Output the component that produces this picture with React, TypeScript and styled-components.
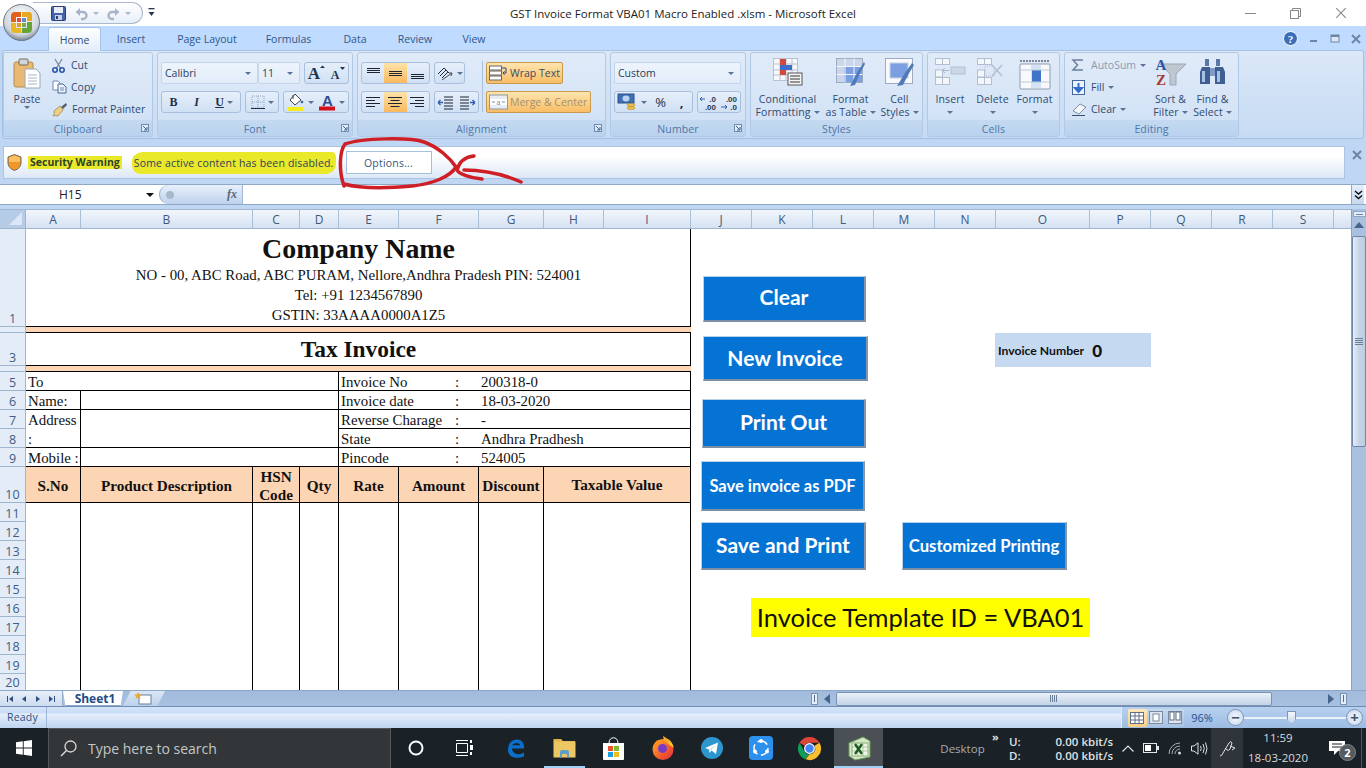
import React from 'react';
import styled, { createGlobalStyle } from 'styled-components';

const UI = '"Open Sans", "Noto Sans", sans-serif';
const SERIF = '"Liberation Serif", serif';
const CAL = 'Lato, "Open Sans", sans-serif';

const Global = createGlobalStyle`
  html, body { margin: 0; padding: 0; background: #fff; overflow: hidden; }
  * { box-sizing: border-box; }
  svg { display: block; flex: none; overflow: visible; }
`;

const Page = styled.div`
  position: relative; width: 1366px; height: 768px; overflow: hidden;
  display: flex; flex-direction: column; background: #bfd7f3; font-family: ${UI};
`;

/* ---------- title ---------- */
const TitleBar = styled.div`
  height: 26px; flex: none; background: #fff; display: grid; grid-template-columns: 1fr auto 1fr; align-items: center;
`;
const Qat = styled.div`
  display: flex; align-items: center; height: 22px; margin-top: 2px; padding-left: 17px;
  width: 143px;
`;
const QatPill = styled.div`
  position: absolute; left: 33px; top: 2px; width: 110px; height: 22px; border: 1px solid #a9b8cb; border-left: none;
  border-radius: 0 11px 11px 0; background: linear-gradient(#fff, #e8eff8);
  display: flex; align-items: center; padding-left: 18px;
`;
const QatMore = styled.div`position: absolute; left: 148px; top: 8px;`;
const Orb = styled.div`position: absolute; left: 3px; top: 4px; width: 37px; height: 37px; z-index: 3;`;
const Title = styled.div`font-size: 11.5px; color: #222; white-space: nowrap; padding-top: 1px;`;
const WinBtns = styled.div`
  display: flex; justify-content: flex-end; align-items: center; padding-right: 19px; gap: 34px;
`;
const Gap = styled.span<{ $w: number }>`width: ${p => p.$w}px; flex: none;`;

/* ---------- tabs ---------- */
const TabsRow = styled.div`
  height: 24px; flex: none; background: #bfdbff; display: flex; align-items: flex-end; padding-left: 48px;
`;
const Tab = styled.div<{ $on?: boolean; $w: number }>`
  width: ${p => p.$w}px; height: 23px; display: flex; align-items: center; justify-content: center;
  font-size: 10.5px; color: #2f5687; padding-top: 1px;
  ${p => p.$on ? `background: linear-gradient(#fdfeff, #e3eefa); border: 1px solid #a8c4e4; border-bottom: none; border-radius: 3px 3px 0 0; margin-bottom:-1px; height:24px; z-index:1; color:#2a4a75;` : ''}
`;
const TabRight = styled.div`
  margin-left: auto; display: flex; align-items: center; height: 23px; padding-right: 5px; gap: 12px;
`;

/* ---------- ribbon ---------- */
const Ribbon = styled.div`
  height: 89px; flex: none; margin: 0 2px; display: flex; gap: 4px; padding: 1px 0 0 0;
  background: linear-gradient(#dbe8f8, #c6dbf3); border: 1px solid #a5c1e3; border-radius: 3px;
`;
const Group = styled.div<{ $w: number }>`
  width: ${p => p.$w}px; height: 85px; display: flex; flex-direction: column; border: 1px solid #b2c9e5; border-radius: 3px;
  background: linear-gradient(#e0ebf9, #cfe0f5);
`;
const GroupBody = styled.div`flex: 1; display: flex; min-height: 0;`;
const GroupLabel = styled.div`
  position: relative; height: 16px; background: linear-gradient(#c4d9f1, #b9d2ee); color: #4e76a8; font-size: 10.5px;
  text-align: center; line-height: 18px; letter-spacing: .1px;
`;
const Launcher = styled.div`position: absolute; right: 3px; top: 4px;`;
const PasteCol = styled.div`
  width: 46px; display: flex; flex-direction: column; align-items: center; padding-top: 5px; font-size: 10.5px; color: #2f4a70;
  span { margin-top: 3px; line-height: 14px; }
`;
const ClipCmds = styled.div`display: flex; flex-direction: column; gap: 4px; padding: 3px 0 0 2px;`;
const Cmd = styled.div<{ $dim?: boolean }>`
  height: 18px; display: flex; align-items: center; gap: 4px; font-size: 10.5px; white-space: nowrap;
  color: ${p => p.$dim ? '#8b9ab0' : '#2f4a70'};
`;
const CmdText = styled.span<{ $ml: number }>`margin-left: ${p => p.$ml}px;`;
const Stack = styled.div<{ $l: number; $gap?: number }>`
  display: flex; flex-direction: column; gap: ${p => p.$gap ?? 8}px; padding: 9px 0 0 ${p => p.$l}px;
`;
const Row = styled.div<{ $gap?: number }>`display: flex; gap: ${p => p.$gap ?? 4}px; height: 22px;`;
const Combo = styled.div<{ $w: number; $mr?: number }>`
  width: ${p => p.$w}px; height: 22px; background: linear-gradient(#eef4fc, #e2ecf9); border: 1px solid #c4d6ec; border-radius: 2px;
  display: flex; align-items: center; justify-content: space-between; padding: 0 6px 0 3px;
  font-size: 10.5px; color: #2a3f5c; margin-right: ${p => p.$mr ?? 0}px;
`;
const Caret = styled.i<{ $c?: string }>`
  width: 0; height: 0; border: 3px solid transparent; border-top: 3px solid ${p => p.$c ?? '#5a7394'}; border-bottom: none; display: block; flex: none;
`;
const BtnGroup = styled.div<{ $w: number }>`
  width: ${p => p.$w}px; height: 22px; display: flex; border: 1px solid #a9c0dc; border-radius: 3px;
  background: linear-gradient(#e6effb, #d0e0f4);
`;
const Btn = styled.div<{ $w?: number; $on?: boolean }>`
  width: ${p => p.$w ? `${p.$w}px` : 'auto'}; ${p => p.$w ? '' : 'flex: 1;'} display: flex; align-items: center; justify-content: center; gap: 3px;
  font: 700 12px ${SERIF}; color: #1f2f45;
  ${p => p.$on ? 'background: linear-gradient(#fde3a8, #f9b95e);' : ''}
`;
const Glyph = styled.span<{ $i?: boolean; $u?: boolean }>`
  font-style: ${p => p.$i ? 'italic' : 'normal'}; text-decoration: ${p => p.$u ? 'underline' : 'none'};
`;
const NumGlyph = styled.span<{ $b?: boolean }>`font: ${p => p.$b ? 700 : 400} 13px ${UI};`;
const Divider = styled.div`width: 1px; height: 51px; background: #a9c0dc; margin: 8px 3px 0 3px;`;
const OrangeBtn = styled.div<{ $w: number; $dim?: boolean }>`
  width: ${p => p.$w}px; height: 22px; border: 1px solid #c89a4d; border-radius: 2px; background: linear-gradient(#fde5ae, #f9bd66);
  display: flex; align-items: center; gap: 2px; padding-left: 2px; font-size: 10.5px; white-space: nowrap;
  color: ${p => p.$dim ? '#a78f6c' : '#3a4a60'};
`;
const BigCmd = styled.div<{ $w: number }>`
  width: ${p => p.$w}px; display: flex; flex-direction: column; align-items: center; font-size: 10.5px; line-height: 13px; color: #2f4a70; text-align: center; white-space: nowrap;
  padding-top: 5px; letter-spacing: .12px;
  & > svg { margin-bottom: 7px; }
`;
const BigLine = styled.div<{ $mt: number }>`margin-top: ${p => p.$mt}px;`;
const Line2 = styled.div`display: flex; align-items: center; gap: 3px; justify-content: center; height: 13px;`;
const EditCol = styled.div`width: 85px; padding: 3px 0 0 7px; display: flex; flex-direction: column; gap: 4px;`;

/* ---------- message bar ---------- */
const MsgWrap = styled.div`
  height: 45px; flex: none; padding: 7px 3px 5px 3px; display: flex; position: relative;
`;
const MsgBar = styled.div`
  width: 1342px; height: 33px; background: linear-gradient(#ffffff 30%, #dde8f6); border: 1px solid #a9c4e4;
  display: flex; align-items: center; padding-left: 3px; font-size: 10.5px;
`;
const Mark = styled.span`
  background: #e9e92a; height: 13px; line-height: 13px; font-weight: 700; color: #2c4226; padding: 0 2px; margin-left: 6px; white-space: nowrap;
`;
const Brush = styled.span`
  background: #e9e92a; height: 22px; line-height: 22px; margin-left: 10px; padding: 0 2px; color: #31405a; border-radius: 11px 4px 10px 8px / 9px 5px 10px 9px; white-space: nowrap; letter-spacing: .17px;
`;
const OptionsBtn = styled.div`
  width: 86px; height: 23px; margin-left: 10px; border: 1px solid #a9c0dc; background: #fff; color: #36567f; display: flex; align-items: center; justify-content: center; font-size: 10.5px; letter-spacing: .2px;
`;
const MsgClose = styled.div`position: absolute; right: 4px; top: 11px;`;
const Scribble = styled.svg`position: absolute; left: 0; top: 0; pointer-events: none; z-index: 5;`;

/* ---------- formula ---------- */
const FormulaBar = styled.div`
  height: 21px; flex: none; display: flex; background: #fff; border-top: 1px solid #8ea8c6; border-bottom: 1px solid #8ea8c6; padding-right: 2px;
`;
const NameBox = styled.div`
  width: 159px; display: flex; align-items: center; font-size: 12px; color: #222; padding-left: 59px; position: relative;
`;
const NameCaret = styled.i`position: absolute; left: 146px; top: 8px; width: 0; height: 0; border: 4px solid transparent; border-top: 4px solid #111; border-bottom: none;`;
const FxBox = styled.div`
  width: 84px; background: linear-gradient(#e8f0fa, #bdd2ec); border-left: 1px solid #8ea8c6; border-right: 1px solid #a3bad6;
  border-radius: 10px 0 0 10px; display: flex; align-items: center; justify-content: space-between; padding: 0 5px 0 6px;
  font: italic 700 12px ${SERIF}; color: #5a6675;
`;
const FxDot = styled.i`width: 8px; height: 8px; border-radius: 50%; background: #a9b9cc;`;
const FormulaInput = styled.div`flex: 1;`;
const Expand = styled.div`
  width: 13px; background: linear-gradient(#e6eff9, #c6d8ef); border-left: 1px solid #8ea8c6; display: flex; align-items: center; justify-content: center;
`;

/* ---------- sheet ---------- */
const SheetArea = styled.div`
  height: 485px; flex: none; padding-top: 4px; display: flex;
`;
const SheetMain = styled.div`flex: 1; display: flex; flex-direction: column; min-width: 0;`;
const ColRow = styled.div`display: flex; height: 20px; flex: none; background: linear-gradient(#f2f6fc, #d5e2f3); border-top: 1px solid #9eb6ce; border-bottom: 1px solid #9eb6ce;`;
const Corner = styled.div`width: 26px; background: #b5cbe6; border-right: 1px solid #9eb6ce; position: relative; overflow: hidden;
  &::after { content: ''; position: absolute; right: 3px; bottom: 3px; width: 0; height: 0; border-left: 13px solid transparent; border-bottom: 13px solid #dbe7f6; }
`;
const ColH = styled.div<{ $w: number }>`
  width: ${p => p.$w}px; border-right: 1px solid #a9bfd8; font-size: 12px; color: #41597a; display: flex; align-items: center; justify-content: center;
`;
const SheetBody = styled.div`flex: 1; display: flex; min-height: 0; background: #fff; overflow: hidden;`;
const RowHeads = styled.div`width: 26px; flex: none; background: #e4ecf7; border-right: 1px solid #9eb6ce;`;
const RowH = styled.div<{ $h: number }>`
  height: ${p => p.$h}px; border-bottom: 1px solid #9eb6ce; font-size: 12.5px; line-height: 14px; color: #3f5c82; display: flex; align-items: flex-end; justify-content: center; overflow: hidden;
  &:last-child { border-bottom: none; }
`;
const Canvas = styled.div`position: relative; flex: 1;`;
const Invoice = styled.div`
  width: 665px; display: grid;
  grid-template-columns: 55px 172px 47px 39px 60px 80px 65px 60px 87px;
  grid-template-rows: 98px 6px 33px 6px repeat(5, 19px) 36px 187px;
  border-right: 1px solid #000; font-family: ${SERIF}; color: #111; font-size: 14.85px;
`;
const Cell = styled.div<{ $c?: string; $r?: string }>`
  grid-column: ${p => p.$c ?? 'auto'}; grid-row: ${p => p.$r ?? 'auto'};
  border-right: 1px solid #000; border-bottom: 1px solid #000;
  padding: 1px 0 0 2px; line-height: 18.5px; white-space: nowrap; overflow: hidden;
`;
const Letterhead = styled.div`
  grid-column: 1 / -1; border-bottom: 1px solid #000; text-align: center; display: flex; flex-direction: column; align-items: center; padding-top: 4px;
`;
const Company = styled.div`font-weight: 700; font-size: 27.9px; line-height: 31px; margin-bottom: 1px;`;
const AddrLine = styled.div`line-height: 20px;`;
const Band = styled.div`grid-column: 1 / -1; background: #fcd5b4; border-bottom: 1px solid #000;`;
const TaxTitle = styled.div`grid-column: 1 / -1; border-bottom: 1px solid #000; text-align: center; font-weight: 700; font-size: 23.4px; line-height: 33px;`;
const Detail = styled.div<{ $r: number }>`grid-column: 5 / -1; grid-row: ${p => p.$r}; display: flex; border-bottom: 1px solid #000; padding: 1px 0 0 2px; line-height: 18px;`;
const DLabel = styled.div`width: 114px; white-space: nowrap;`;
const DColon = styled.div`width: 26px;`;
const Head = styled.div<{ $c?: string; $pt?: number }>`
  grid-column: ${p => p.$c ?? 'auto'}; background: #fcd5b4; border-right: 1px solid #000; border-bottom: 1px solid #000; padding-top: ${p => p.$pt ?? 2}px;
  font-weight: 700; font-size: 15.2px; line-height: 18px; text-align: center; display: flex; align-items: center; justify-content: center; white-space: pre-line;
`;
const Blank = styled.div<{ $c?: string }>`grid-column: ${p => p.$c ?? 'auto'}; border-right: 1px solid #000;`;

const Shape = styled.div<{ $x: number; $y: number; $w: number; $h: number; $fs: number; $pb?: number }>`
  position: absolute; left: ${p => p.$x - 26}px; top: ${p => p.$y - 229}px; width: ${p => p.$w}px; height: ${p => p.$h}px;
  background: #0473d4; color: #fff; font: 700 ${p => p.$fs}px ${CAL}; padding-bottom: ${p => p.$pb ?? 3}px;
  border-top: 1px solid #b9d3ea; border-left: 1px solid #b9d3ea; border-right: 2px solid #8596a8; border-bottom: 2px solid #7c8ea3;
  display: flex; align-items: center; justify-content: center; white-space: nowrap;
`;
const InvNo = styled.div`
  position: absolute; left: ${995 - 26}px; top: ${333 - 229}px; width: 156px; height: 34px; background: #c5d9f1; display: flex; align-items: center; padding-left: 3px; gap: 8px;
  font: 700 12.2px ${CAL}; color: #111; white-space: nowrap;
  b { font-size: 17px; font-weight: 900; }
`;
const TemplateId = styled.div`
  position: absolute; left: ${751 - 26}px; top: ${598 - 229}px; width: 339px; height: 39px; background: #ffff00; color: #111; font: 400 25.5px ${CAL}; display: flex; align-items: center; justify-content: center; white-space: nowrap; padding-bottom: 2px;
`;

const VScroll = styled.div`
  width: 15px; flex: none; background: #a9c0de; display: flex; flex-direction: column; align-items: center; position: relative; border-left: 1px solid #87a2c4;
`;
const Split = styled.div`width: 13px; height: 6px; margin-top: 2px; background: #e4edf8; border: 1px solid #8ba6c8; display: flex; align-items: center; justify-content: center;
  &::after { content: ''; width: 7px; height: 1px; background: #6c84a3; }
`;
const UpArrow = styled.i`width: 0; height: 0; margin-top: 5px; border: 5px solid transparent; border-bottom: 6px solid #46658c; border-top: none;`;
const VThumb = styled.div`
  margin-top: 8px; width: 14px; height: 211px; background: linear-gradient(90deg, #e6eef8, #c6d4e6 50%, #bccde2); border: 1px solid #6f88a8; border-radius: 2px; display: flex; align-items: center; justify-content: center;
`;
const Grip = styled.div<{ $v?: boolean }>`
  ${p => p.$v ? 'width: 8px; height: 7px; background: repeating-linear-gradient(90deg, #6a7f99 0 1px, transparent 1px 2px);' : 'width: 8px; height: 7px; background: repeating-linear-gradient(#6a7f99 0 1px, transparent 1px 2px);'}
`;

/* ---------- tab bar ---------- */
const TabBar = styled.div`
  height: 17px; flex: none; display: flex; background: linear-gradient(#a2bbdc, #a9c1e0); border-top: 1px solid #8ca7c8; border-bottom: 1px solid #6f8db3; align-items: stretch;
`;
const SheetNav = styled.div`width: 63px; flex: none; background: linear-gradient(#e7eff9, #cddcf0); border-right: 1px solid #97afcd; display: flex; align-items: center; justify-content: space-around; padding: 0 3px;`;
const SheetTab = styled.div`
  width: 60px; flex: none; background: #fff; border-bottom: 1px solid #8ca7c8; font: 700 12px ${UI}; color: #234a85; display: flex; align-items: center; justify-content: center; padding-left: 4px;
  clip-path: polygon(0 0, 100% 0, 96% 100%, 4% 100%);
`;
const NewTab = styled.div`
  width: 42px; height: 15px; flex: none; background: linear-gradient(#dbe7f6, #bdd2ec); display: flex; align-items: center; justify-content: center; clip-path: polygon(18% 0, 100% 0, 82% 100%, 0 100%);
`;
const HScrollZone = styled.div`
  margin-left: auto; width: 555px; display: flex; align-items: center; height: 100%;
`;
const Tick = styled.div`width: 7px; height: 12px; background: #e6eef8; border: 1px solid #7b93b3; display: flex; justify-content: center; align-items: center; margin-right: 2px;
  &::after { content: ''; width: 1px; height: 7px; background: #566c8a; }
`;
const ArrowL = styled.i`width: 0; height: 0; margin-left: 4px; border: 5px solid transparent; border-right: 6px solid #46658c; border-left: none;`;
const ArrowR = styled.i`width: 0; height: 0; margin-right: 6px; border: 5px solid transparent; border-left: 6px solid #46658c; border-right: none;`;
const HThumb = styled.div`
  width: 441px; height: 14px; margin-left: 6px; margin-right: 56px; background: linear-gradient(#eaf1f9, #c3d3e6); border: 1px solid #7b93b3; border-radius: 2px; display: flex; align-items: center; justify-content: center;
`;
const CornerFill = styled.div`width: 17px; flex: none;`;

/* ---------- status ---------- */
const StatusBar = styled.div`
  height: 21px; flex: none; display: flex; align-items: stretch; background: linear-gradient(#d4e4f9 0, #c8dcf6 30%, #e7f0fb 32%, #bfd4f0); font-size: 11px; color: #2e5180;
`;
const Ready = styled.div`width: 47px; display: flex; align-items: center; padding: 0 0 2px 7px; border-right: 1px solid #9db7d8; font-size: 10.5px; letter-spacing: .2px;`;
const StatusRight = styled.div`
  margin-left: auto; width: 245px; display: flex; align-items: center; background: linear-gradient(#b7d0ef, #9dbce3); padding-left: 6px; border-left: 1px solid #e2ecf9;
`;
const ViewBtns = styled.div`display: flex; width: 56px; height: 18px; background: linear-gradient(#c6d9f1,#a9c3e5); border-radius: 2px;`;
const ViewBtn = styled.div<{ $on?: boolean }>`
  flex: 1; display: flex; align-items: center; justify-content: center; ${p => p.$on ? 'background: linear-gradient(#fde9bd,#fbcf83); border-radius: 2px;' : ''}
`;
const Pct = styled.div`width: 36px; margin-right: 7px; text-align: center; color: #24528f; font-size: 11px;`;
const ZoomKnob = styled.div`
  width: 17px; height: 17px; flex: none; border-radius: 50%; border: 1px solid #7e96b6; background: radial-gradient(#f4f8fd, #c5d6ec); display: flex; align-items: center; justify-content: center; color: #3e556f; font: 700 15px/13px ${UI};
`;
const ZoomTrack = styled.div`
  width: 102px; height: 2px; background: #e9f1fb; position: relative;
`;
const ZoomThumb = styled.div`
  position: absolute; left: 43px; top: -6px; width: 9px; height: 13px; background: linear-gradient(#f5f8fd,#c7d6ea); border: 1px solid #7e96b6; clip-path: polygon(0 0, 100% 0, 100% 65%, 50% 100%, 0 65%);
`;

/* ---------- taskbar ---------- */
const Taskbar = styled.div`height: 40px; flex: none; background: #1a2127; display: flex; align-items: stretch; color: #d8dadc;`;
const Start = styled.div`width: 48px; display: flex; align-items: center; justify-content: center;`;
const SearchBox = styled.div`
  width: 343px; background: #333638; border: 1px solid #55585b; border-bottom: none; display: flex; align-items: center; padding-left: 11px; gap: 11px; font-size: 14px; color: #c4c6c8;
`;
const Slot = styled.div<{ $active?: boolean; $open?: boolean; $ml?: number }>`
  width: 49px; display: flex; align-items: center; justify-content: center; margin-left: ${p => p.$ml ?? 0}px; position: relative;
  ${p => p.$active ? 'background: #4a5056;' : ''}
  ${p => (p.$open || p.$active) ? `&::after { content: ''; position: absolute; left: ${p.$active ? 0 : 4}px; right: ${p.$active ? 0 : 4}px; bottom: 0; height: 2px; background: #9fd0f5; }` : ''}
`;
const Spacer = styled.div`flex: 1;`;
const TrayItem = styled.div<{ $w: number; $hl?: boolean }>`
  width: ${p => p.$w}px; display: flex; align-items: center; justify-content: center; ${p => p.$hl ? 'background: #2f353a;' : ''}
  font-size: 12px;
`;
const DeskLabel = styled(TrayItem)`color: #a9acaf; font-size: 11.5px; padding-left: 0;`;
const Chevrons = styled(TrayItem)`align-items: flex-start; padding: 1px 5px 0 0; font: 700 11px ${UI}; color: #ddd; letter-spacing: -1px;`;
const Net = styled.div`
  width: 113px; display: flex; justify-content: space-between; padding: 7px 5px 0 4px; font: 600 11.5px/13.5px ${UI}; color: #dfe1e3; white-space: nowrap; text-align: right;
`;
const NetLabels = styled.div`text-align: left;`;
const Clock = styled.div`
  width: 70px; display: flex; flex-direction: column; align-items: center; justify-content: center; font-size: 11.5px; line-height: 20px; color: #d7d9db; white-space: nowrap;
`;
const Notif = styled.div`width: 48px; position: relative; display: flex; align-items: center; justify-content: center;`;
const NotifBadge = styled.div`
  position: absolute; left: 26px; top: 16px; width: 17px; height: 17px; border-radius: 50%; background: #555a5f; border: 1px solid #80858a; color: #fff; font: 700 11px/15px ${UI}; text-align: center;
`;
const EndEdge = styled.div`width: 5px; border-left: 1px solid #555;`;

/* ---------- icons ---------- */
const IOrb = () => (
  <svg width="37" height="37" viewBox="0 0 37 37">
    <defs>
      <radialGradient id="oR" cx="50%" cy="35%" r="65%"><stop offset="0" stopColor="#ffffff" /><stop offset=".75" stopColor="#cfd6de" /><stop offset="1" stopColor="#7b8593" /></radialGradient>
    </defs>
    <circle cx="18.5" cy="18.5" r="18" fill="url(#oR)" stroke="#6d7783" />
    <path d="M8 12 Q8 8 12 8 L18 8 L18 13 L13 13 L13 18 L8 18 Z" fill="#e2601d" />
    <path d="M19 8 L26 8 Q29 8 29 12 L29 17 L24 17 L24 13 L19 13 Z" fill="#e6a91f" />
    <path d="M8 19 L13 19 L13 24 L18 24 L18 29 L12 29 Q8 29 8 25 Z" fill="#e8b525" />
    <path d="M24 18 L29 18 L29 25 Q29 29 25 29 L19 29 L19 24 L24 24 Z" fill="#66a53a" />
    <rect x="14" y="14" width="4" height="4" fill="#d8503a" /><rect x="19" y="14" width="4" height="4" fill="#5b8fc9" />
    <rect x="14" y="19" width="4" height="4" fill="#e49a28" /><rect x="19" y="19" width="4" height="4" fill="#79ad50" />
  </svg>
);
const ISave = () => (
  <svg width="15" height="15" viewBox="0 0 15 15"><rect x=".5" y=".5" width="14" height="14" rx="1" fill="#4563a8" stroke="#2b3d75" /><rect x="3" y="1" width="9" height="6" fill="#e8eef8" /><rect x="4" y="9" width="7" height="5" fill="#c8d2e6" /><rect x="5" y="10" width="2" height="3" fill="#2b3d75" /></svg>
);
const Flippable = styled.svg<{ $flip?: boolean }>`transform: ${p => p.$flip ? 'scaleX(-1)' : 'none'};`;
const IUndo = ({ flip }: { flip?: boolean }) => (
  <Flippable $flip={flip} width="13" height="13" viewBox="0 0 13 13"><path d="M3 5 H8 A3.5 3.5 0 0 1 8 12 H6" fill="none" stroke="#a7b5c7" strokeWidth="2.4" /><path d="M5 1 L5 9 L0.5 5 Z" fill="#a7b5c7" /></Flippable>
);
const IMore = () => (<svg width="7" height="9" viewBox="0 0 7 9"><rect width="6" height="1.3" x=".5" y="0" fill="#26364d" /><path d="M.5 4 H6.5 L3.5 8 Z" fill="#26364d" /></svg>);
const IHelp = () => (<svg width="15" height="15" viewBox="0 0 15 15"><circle cx="7.5" cy="7.5" r="7" fill="#3d6fb8" stroke="#fff" /><text x="7.5" y="11.5" textAnchor="middle" fontSize="11" fontWeight="700" fontFamily="Liberation Serif" fill="#fff">?</text></svg>);
const IX = ({ s = 10, c = '#6d85a3', w = 2 }: { s?: number; c?: string; w?: number }) => (<svg width={s} height={s} viewBox="0 0 10 10"><path d="M1 1 L9 9 M9 1 L1 9" stroke={c} strokeWidth={w} /></svg>);
const IMin = () => (<svg width="8" height="8" viewBox="0 0 8 8"><rect y="5" width="7" height="2" fill="#6d85a3" /></svg>);
const IRes = () => (<svg width="9" height="9" viewBox="0 0 9 9"><rect x="1" y="1" width="8" height="7" fill="#dbe7f6" stroke="#6d85a3" /><rect x="1" y="1" width="8" height="2" fill="#6d85a3" /></svg>);
const IPaste = () => (
  <svg width="28" height="31" viewBox="0 0 28 31"><rect x="1" y="4" width="19" height="25" rx="2" fill="#e9b872" stroke="#b58a4e" /><rect x="6" y="1" width="9" height="6" rx="1" fill="#cfd5dc" stroke="#7d6b4e" /><path d="M12 11 H23 L27 15 V30 H12 Z" fill="#fff" stroke="#9aa8ba" /><path d="M15 17H24M15 20H24M15 23H24M15 26H24" stroke="#aab6c6" /></svg>
);
const ICut = () => (<svg width="13" height="15" viewBox="0 0 13 15"><path d="M3 1 L9 11 M10 1 L4 11" stroke="#7d8da3" strokeWidth="1.4" /><circle cx="3" cy="12" r="2.2" fill="none" stroke="#2d56a8" strokeWidth="1.6" /><circle cx="10" cy="12" r="2.2" fill="none" stroke="#2d56a8" strokeWidth="1.6" /></svg>);
const ICopy = () => (<svg width="15" height="14" viewBox="0 0 15 14"><path d="M1 1 H6 L8 3 V10 H1 Z" fill="#fff" stroke="#6d8bb3" /><path d="M6 4 H11 L14 7 V13 H6 Z" fill="#eef4fb" stroke="#44689c" /><path d="M8 8H12M8 10H12" stroke="#6d8bb3" /></svg>);
const IPainter = () => (<svg width="16" height="15" viewBox="0 0 16 15"><path d="M9 5 L14 1 L15 3 L11 7 Z" fill="#54606f" /><path d="M2 9 L8 4 L11 8 L6 14 Q3 13 1 14 Q3 12 2 9 Z" fill="#ecd087" stroke="#9a7c3c" strokeWidth=".7" /></svg>);
const ILauncher = () => (<svg width="8" height="8" viewBox="0 0 8 8"><rect x=".5" y=".5" width="7" height="7" fill="#e3edf9" stroke="#6f8cb0" /><path d="M2 2 L6 6 M6 3 V6 H3" stroke="#41628d" fill="none" /></svg>);
const IGrow = ({ big }: { big?: boolean }) => (
  <svg width="18" height="18" viewBox="0 0 18 18"><text x="7" y="15" textAnchor="middle" fontFamily="Liberation Serif" fontWeight="700" fontSize={big ? 17 : 12} fill="#22344d">A</text>{big ? <path d="M13 4 L15.5 1.5 L18 4 Z" fill="#22344d" /> : <path d="M12 3 H17 L14.5 6 Z" fill="#22344d" />}</svg>
);
const IBorders = () => (<svg width="14" height="14" viewBox="0 0 14 14"><rect x="1" y="1" width="12" height="12" fill="none" stroke="#8fa2bb" strokeDasharray="1 1" /><path d="M7 1V13M1 7H13" stroke="#8fa2bb" strokeDasharray="1 1" /><path d="M0 13.5H14" stroke="#1e2f47" /></svg>);
const IFill = () => (<svg width="18" height="18" viewBox="0 0 18 18"><path d="M8 1 L14 7 L8 12 L3 7 Z" fill="#fff" stroke="#444" /><path d="M6 2 V6" stroke="#444" /><circle cx="15" cy="9" r="1.3" fill="#2f5fa0" /><rect x="1" y="14" width="15" height="4" fill="#f4ec1d" /></svg>);
const IColor = () => (<svg width="17" height="18" viewBox="0 0 17 18"><text x="8.5" y="12.5" textAnchor="middle" fontFamily="Liberation Sans" fontWeight="700" fontSize="15" fill="#2e4c90">A</text><rect y="13.5" width="16" height="4" fill="#d4101a" /></svg>);
const Lines = ({ kind, w = 15 }: { kind: string; w?: number }) => {
  const ys = { t: [2, 4, 6], m: [5, 7, 9], b: [8, 10, 12] } as Record<string, number[]>;
  if (ys[kind]) return (<svg width={w} height="14" viewBox="0 0 15 14">{ys[kind].map((y, i) => <rect key={i} x="1" y={y} width="13" height="1" fill="#1c2430" />)}</svg>);
  const rows = [2, 5, 8, 11];
  const x = (i: number) => {
    const long = i % 2 === 0; const l = long ? 14 : 9;
    if (kind === 'l') return [0, l]; if (kind === 'c') return [(14 - l) / 2, l]; return [14 - l, l];
  };
  return (<svg width="15" height="14" viewBox="0 0 15 14">{rows.map((y, i) => <rect key={i} x={x(i)[0]} y={y} width={x(i)[1]} height="1" fill="#1c2430" />)}</svg>);
};
const IOrient = () => (<svg width="18" height="15" viewBox="0 0 18 15"><path d="M2 8 L8 2 L13 7 M4 10 L10 4 M6 12 L12 6" stroke="#222d3d" fill="none" /><path d="M6 14 L16 7 M13 7 L16 7 L15 10" stroke="#444f5f" fill="none" /></svg>);
const IIndent = ({ flip }: { flip?: boolean }) => (<Flippable $flip={flip} width="17" height="15" viewBox="0 0 17 15"><path d="M7 2H16M7 5H16M7 8H16M7 11H16M7 14H16" stroke="#1c2430" /><path d="M1 7.5H6M1 7.5L3.5 5M1 7.5L3.5 10" stroke="#2e5fb0" strokeWidth="1.3" fill="none" /></Flippable>);
const IWrap = () => (<svg width="19" height="16" viewBox="0 0 19 16"><rect x=".5" y="1" width="12" height="4" fill="#fff" stroke="#666" /><rect x=".5" y="6" width="12" height="4" fill="#fff" stroke="#666" /><rect x=".5" y="11" width="12" height="4" fill="#fff" stroke="#666" /><path d="M13 3 H17 V8 H14 M15.5 6.3 L14 8 L15.5 9.7" fill="none" stroke="#2c4a80" /></svg>);
const IMerge = () => (<svg width="19" height="16" viewBox="0 0 19 16"><rect x=".5" y="1" width="18" height="14" fill="#e8edf3" stroke="#8d98a6" /><rect x="1" y="5" width="17" height="6" fill="#fff" /><path d="M3 8 H6 M16 8 H13" stroke="#7d8ca0" /><text x="9.5" y="10.5" textAnchor="middle" fontSize="7" fill="#7d8ca0" fontFamily="Liberation Sans">a</text></svg>);
const IMoney = () => (<svg width="20" height="18" viewBox="0 0 20 18"><rect x="0" y="1" width="16" height="9" fill="#3f70b5" stroke="#2a4f88" /><ellipse cx="8" cy="5.5" rx="3.5" ry="3" fill="#bcd2ee" /><ellipse cx="13" cy="12" rx="4" ry="1.6" fill="#eec24a" stroke="#a57d1d" strokeWidth=".5" /><ellipse cx="13" cy="15" rx="4" ry="1.6" fill="#eec24a" stroke="#a57d1d" strokeWidth=".5" /></svg>);
const IDec = ({ more }: { more?: boolean }) => (
  <svg width="19" height="17" viewBox="0 0 19 17">
    <text x="17" y="7.5" textAnchor="end" fontSize="8" fontWeight="700" fontFamily="Liberation Sans" fill="#2a3b52">{more ? '.00' : '.0'}</text>
    <text x="17" y="16" textAnchor="end" fontSize="8" fontWeight="700" fontFamily="Liberation Sans" fill="#2a3b52">{more ? '.0' : '.00'}</text>
    <path d={more ? 'M1 13H7M7 13L5 11M7 13L5 15' : 'M1 5H6M1 5L3 3M1 5L3 7'} stroke="#2e5fb0" fill="none" />
  </svg>
);
const ICond = () => (<svg width="30" height="28" viewBox="0 0 30 28"><g stroke="#b9c2cc"><rect x=".5" y=".5" width="24" height="22" fill="#f6f8fb" /><path d="M.5 6H24.5M.5 12H24.5M.5 17H24.5M7 .5V22.5M13 .5V22.5M19 .5V22.5" /></g><rect x="7" y="1" width="6" height="5" fill="#d24a3e" /><rect x="7" y="6" width="6" height="11" fill="#d24a3e" /><rect x="7" y="7" width="12" height="5" fill="#3f6cc6" /><rect x="15" y="15" width="14" height="12" fill="#f5f5f5" stroke="#555" /><path d="M17 18H27M17 21H27M17 24H27" stroke="#333" /></svg>);
const ITable = () => (<svg width="30" height="28" viewBox="0 0 30 28"><rect x=".5" y=".5" width="26" height="24" fill="#cbd6ea" stroke="#9cabc0" /><rect x="8" y="9" width="18" height="15" fill="#7b9fe0" /><path d="M.5 8.5H26.5M.5 16.5H26.5M9 .5V24.5M18 .5V24.5" stroke="#f4f6fa" /><path d="M14 28 L22 13 L28 4 L29 6 L24 15 L19 27 Z" fill="#4f7ab8" /></svg>);
const IStyle = () => (<svg width="30" height="28" viewBox="0 0 30 28"><rect x=".5" y=".5" width="27" height="25" fill="#f7f9fc" stroke="#9cabc0" /><rect x="5" y="5" width="18" height="15" fill="#7b9fe0" stroke="#c9d3e2" /><path d="M12 28 L20 15 L27 5 L29 7 L23 17 L18 27 Z" fill="#4f7ab8" /></svg>);
const IInsert = ({ del }: { del?: boolean }) => (
  <svg width="31" height="28" viewBox="0 0 31 28"><g fill="#f3f6fa" stroke="#b3bfcf"><rect x=".5" y=".5" width="7" height="6" /><rect x="7.5" y=".5" width="7" height="6" /><rect x=".5" y="19.5" width="7" height="7" /><rect x="7.5" y="19.5" width="7" height="7" /><rect x=".5" y="12" width="7" height="7" /></g>
    {del ? <><rect x="8" y="8" width="9" height="10" fill="none" stroke="#b3bfcf" strokeDasharray="1 1" /><path d="M15 7 L25 18 M25 7 L15 18" stroke="#b3bfcf" strokeWidth="1.5" /></>
      : <><rect x="16" y="9" width="14" height="7" fill="#ccd7e6" stroke="#b3bfcf" /><path d="M7 12.5H14M7 12.5L10 10M7 12.5L10 15" stroke="#a9b7c9" fill="none" /></>}
  </svg>
);
const IFormat = () => (<svg width="32" height="33" viewBox="0 0 32 33"><path d="M1 3 H31" stroke="#223" strokeDasharray="2 1" /><rect x="1" y="6" width="30" height="25" rx="1" fill="#f7f9fc" stroke="#8d9bb0" /><rect x="12" y="7" width="10" height="23" fill="#d5e2f4" /><rect x="13" y="12" width="9" height="12" fill="#3f74c9" /><path d="M1 12H31M1 24H31" stroke="#c0cad8" /></svg>);
const ISigma = () => (<svg width="11" height="12" viewBox="0 0 11 12"><path d="M10 2 V1 H1 L5.5 6 L1 11 H10 V10" fill="none" stroke="#6b7f9b" strokeWidth="1.5" /></svg>);
const IFillDown = () => (<svg width="13" height="15" viewBox="0 0 13 15"><rect x=".5" y=".5" width="12" height="14" fill="#eef4fb" stroke="#44689c" /><path d="M6.5 3 V9 M3 8 L6.5 12 L10 8 Z" stroke="#2e6fd0" strokeWidth="2" fill="#2e6fd0" /></svg>);
const IEraser = () => (<svg width="15" height="13" viewBox="0 0 15 13"><path d="M1 8 L8 1 L14 4 L7 11 Z" fill="#f5f6f8" stroke="#7d8da3" /><path d="M0 12.5 H13" stroke="#3b4d68" /></svg>);
const ISort = () => (
  <svg width="33" height="28" viewBox="0 0 33 28"><path d="M6 6 H32 L22 16 V27 H16 V16 Z" fill="#bfc7d1" stroke="#9ca7b5" /><text x="7" y="12" textAnchor="middle" fontFamily="Liberation Serif" fontWeight="700" fontSize="15" fill="#2e54a8">A</text><text x="7" y="27" textAnchor="middle" fontFamily="Liberation Serif" fontWeight="700" fontSize="15" fill="#a53a30">Z</text></svg>
);
const IBinoc = () => (
  <svg width="27" height="28" viewBox="0 0 27 28"><path d="M6 1 H10 V8 H6 Z M17 1 H21 V8 H17 Z" fill="#5777a8" /><path d="M3 9 H11 V26 H1 V14 Z" fill="#3f5f93" /><path d="M16 9 H24 L26 14 V26 H16 Z" fill="#3f5f93" /><rect x="11" y="10" width="5" height="8" fill="#7f9bc6" /><rect x="3" y="13" width="3" height="11" fill="#a9c1e2" /><rect x="18" y="13" width="3" height="11" fill="#a9c1e2" /></svg>
);
const IExpand = () => (<svg width="9" height="10" viewBox="0 0 9 10"><path d="M1 1 L4.5 4 L8 1 M1 5.5 L4.5 8.5 L8 5.5" fill="none" stroke="#111" strokeWidth="1.4" /></svg>);
const Nav = ({ d }: { d: string }) => (<svg width="8" height="8" viewBox="0 0 8 8"><path d={d} fill="#2d4f80" /></svg>);
const INewSheet = () => (<svg width="20" height="13" viewBox="0 0 20 13"><rect x="5" y="3" width="12" height="9" fill="#fff" stroke="#6b7f9b" /><path d="M4 0 L5.2 2.4 L8 2.5 L5.8 4.2 L6.6 7 L4 5.4 L1.4 7 L2.2 4.2 L0 2.5 L2.8 2.4 Z" fill="#e8a831" /></svg>);
const IViewN = () => (<svg width="14" height="12" viewBox="0 0 14 12"><rect x=".5" y=".5" width="13" height="11" fill="#fff" stroke="#5d6e85" /><path d="M.5 4H13.5M.5 8H13.5M5 .5V11.5M9 .5V11.5" stroke="#5d6e85" /></svg>);
const IViewP = () => (<svg width="14" height="13" viewBox="0 0 14 13"><rect x=".5" y=".5" width="13" height="12" fill="#dfe5ee" stroke="#7a8a9f" /><rect x="4" y="3" width="6" height="7" fill="#fff" stroke="#7a8a9f" /></svg>);
const IViewB = () => (<svg width="14" height="13" viewBox="0 0 14 13"><rect x=".5" y=".5" width="13" height="12" fill="#dfe5ee" stroke="#7a8a9f" /><rect x="2" y="1" width="4" height="8" fill="#fff" stroke="#5d6e85" /><rect x="8" y="1" width="4" height="8" fill="#fff" stroke="#5d6e85" /></svg>);

const IWin = () => (<svg width="16" height="16" viewBox="0 0 16 16"><path d="M0 2.3 L6.8 1.3 V7.6 H0 Z M7.7 1.2 L16 0 V7.6 H7.7 Z M0 8.5 H6.8 V14.7 L0 13.7 Z M7.7 8.5 H16 V16 L7.7 14.8 Z" fill="#fff" /></svg>);
const ISearch = () => (<svg width="17" height="17" viewBox="0 0 17 17"><circle cx="10.5" cy="6.5" r="5.5" fill="none" stroke="#d8dadc" strokeWidth="1.3" /><path d="M6.5 10.5 L1 16" stroke="#d8dadc" strokeWidth="1.5" /></svg>);
const ICortana = () => (<svg width="16" height="16" viewBox="0 0 16 16"><circle cx="8" cy="8" r="6.5" fill="none" stroke="#fff" strokeWidth="2" /></svg>);
const ITaskView = () => (<svg width="17" height="16" viewBox="0 0 17 16"><path d="M0 .5H12M0 15.5H12M.5 3.5H11.5V12.5H.5Z" fill="none" stroke="#fff" /><rect x="14" y="0" width="2" height="3" fill="#fff" /><rect x="14" y="5" width="3" height="5" fill="#fff" /><rect x="14" y="12" width="2" height="3" fill="#fff" /></svg>);
const IEdge = () => (<svg width="22" height="22" viewBox="0 0 22 22"><path d="M3 13 C3 6 7 2.5 12 2.5 C17 2.5 19.5 6.5 19 11.5 L7 11.5 C7.5 17 14 19 19 15.5 L19 19.5 C12 22.5 3 20.5 3 13 Z" fill="#0a6fc9" /><path d="M7.5 8.2 C8 5.8 15.5 5.5 15 8.2 Z" fill="#1a2127" /></svg>);
const IFolder = () => (<svg width="23" height="20" viewBox="0 0 23 20"><path d="M.5 1 H8 L10 3 H22 V4 H.5 Z" fill="#e2b44a" /><rect x=".5" y="3.5" width="22" height="16" fill="#edc764" /><path d="M7 19.5 V14 Q7 12 9 12 H14 Q16 12 16 14 V19.5 H14 V16 H9 V19.5 Z" fill="#5e9fc9" /></svg>);
const IStore = () => (<svg width="23" height="23" viewBox="0 0 23 23"><path d="M7 6 C7 -1 16 -1 16 6" fill="none" stroke="#fff" strokeWidth="1" /><path d="M1 6 H22 V22 Q22 23 21 23 H2 Q1 23 1 22 Z" fill="#fff" /><rect x="6" y="9" width="5" height="5" fill="#e8552c" /><rect x="12" y="9" width="5" height="5" fill="#7fbb2e" /><rect x="6" y="15" width="5" height="5" fill="#19a1e0" /><rect x="12" y="15" width="5" height="5" fill="#f5b91c" /></svg>);
const IFirefox = () => (<svg width="24" height="24" viewBox="0 0 24 24"><defs><linearGradient id="fx" x1="0" y1="0" x2="1" y2="1"><stop offset="0" stopColor="#ffb62a" /><stop offset=".6" stopColor="#f25b2a" /><stop offset="1" stopColor="#e22a4d" /></linearGradient></defs><circle cx="12" cy="13.5" r="10.5" fill="url(#fx)" /><path d="M13 3 C17 1 22 7 22.8 12 L16 7 Z" fill="#ffc32d" /><path d="M12 0 C17 3 19 5 19 8 L13 5 Z" fill="#ffa42a" /><circle cx="11.5" cy="12.5" r="4.5" fill="#7a3bc4" /><path d="M1.5 12 C3 7 5 6 6 4 L9 8 Z" fill="#ff8c1f" /></svg>);
const ITelegram = () => (<svg width="22" height="22" viewBox="0 0 22 22"><circle cx="11" cy="11" r="11" fill="#2e96cf" /><path d="M4 11 L17 5.5 L15 17 L10.5 13.5 L8.5 16 L8 12.5 Z" fill="#fff" /><path d="M8 12.5 L15 8 L10 13" fill="#c2dbe9" /></svg>);
const IShare = () => (<svg width="24" height="24" viewBox="0 0 24 24"><rect width="24" height="24" rx="4" fill="#2d90ec" /><circle cx="12" cy="12" r="7" fill="none" stroke="#fff" strokeWidth="1.5" strokeDasharray="11 3.6" /><circle cx="12" cy="5" r="2" fill="#fff" /><circle cx="6" cy="15.5" r="2" fill="#fff" /><circle cx="18" cy="15.5" r="2" fill="#fff" /></svg>);
const IChrome = () => (<svg width="23" height="23" viewBox="0 0 24 24"><path d="M12 0 A12 12 0 0 1 22.4 6 H12 A6 6 0 0 0 6.8 9 L1.6 6 A12 12 0 0 1 12 0 Z" fill="#db4437" /><path d="M1.6 6 L6.8 15 A6 6 0 0 0 12 18 L6.8 24 L7 23 A12 12 0 0 1 1.6 6 Z" fill="#0f9d58" /><path d="M22.4 6 A12 12 0 0 1 8 23.3 L12 18 A6 6 0 0 0 17.2 9 Z" fill="#fbc02d" /><circle cx="12" cy="12" r="5" fill="#4285f4" stroke="#fff" strokeWidth="1.3" /></svg>);
const IExcel = () => (<svg width="24" height="23" viewBox="0 0 24 23"><path d="M2 6 L16 0 L23 4 V20 L8 23 L2 19 Z" fill="#d4e6c8" stroke="#6a9a55" /><rect x="5" y="6" width="16" height="13" fill="#eef4e8" stroke="#8ab275" /><path d="M5 10H21M5 14H21M11 6V19M16 6V19" stroke="#8ab275" strokeWidth=".6" /><path d="M8 7 L15 17 M15 7 L8 17" stroke="#1e5a24" strokeWidth="2.4" /></svg>);
const IUp = () => (<svg width="12" height="7" viewBox="0 0 12 7"><path d="M.5 6.5 L6 1 L11.5 6.5" fill="none" stroke="#e0e2e4" strokeWidth="1.2" /></svg>);
const IBatt = () => (<svg width="16" height="10" viewBox="0 0 16 10"><rect x=".5" y=".5" width="13" height="9" fill="none" stroke="#e4e6e8" /><rect x="2" y="2" width="6" height="6" fill="#fff" /><rect x="14" y="3" width="2" height="4" fill="#e4e6e8" /></svg>);
const IWifi = () => (<svg width="14" height="13" viewBox="0 0 14 13"><g fill="none" stroke="#a9acaf" strokeWidth="1"><path d="M1 12 A11 11 0 0 1 12 1" /><path d="M4 12 A8 8 0 0 1 12 4" /><path d="M7 12 A5 5 0 0 1 12 7" /></g><circle cx="11.5" cy="11" r="1.5" fill="#d8dadc" /></svg>);
const ISpeaker = () => (<svg width="17" height="13" viewBox="0 0 17 13"><path d="M.5 4 H3 L7 .8 V12.2 L3 9 H.5 Z" fill="none" stroke="#e0e2e4" /><path d="M9.5 4 Q11 6.5 9.5 9 M12 2 Q14.5 6.5 12 11 M14.5 .5 Q17.5 6.5 14.5 12.5" fill="none" stroke="#e0e2e4" /></svg>);
const IPen = () => (<svg width="17" height="17" viewBox="0 0 17 17"><path d="M1 16 Q3 16 4 13 L10 3 Q12 0 13 3 L11 9 Q10 11 8 10 L6 8 M11 6 L16 8 L13 10" fill="none" stroke="#dfe1e3" /></svg>);
const INotif = () => (<svg width="17" height="15" viewBox="0 0 17 15"><path d="M0 0 H16 V10 H9 L5 14 V10 H0 Z" fill="#fff" /><path d="M3 3H13M3 6H13" stroke="#1a2127" /></svg>);

const rowSpec: [string, number][] = [
  ['1', 98], ['', 6], ['3', 33], ['', 6], ['5', 19], ['6', 19], ['7', 19], ['8', 19], ['9', 19], ['10', 36],
  ['11', 19], ['12', 19], ['13', 19], ['14', 19], ['15', 19], ['16', 19], ['17', 19], ['18', 19], ['19', 19], ['20', 16],
];
const cols: [string, number][] = [
  ['A', 55], ['B', 172], ['C', 47], ['D', 39], ['E', 60], ['F', 80], ['G', 65], ['H', 60], ['I', 87],
  ['J', 61], ['K', 61], ['L', 61], ['M', 61], ['N', 61], ['O', 94], ['P', 61], ['Q', 61], ['R', 61], ['S', 61],
];

export default function App() {
  return (
    <Page>
      <Global />
      <Orb><IOrb /></Orb>
      <TitleBar>
        <Qat>
          <QatPill>
            <ISave /><Gap $w={9} /><IUndo /><Gap $w={5} /><Caret $c="#a7b5c7" /><Gap $w={8} /><IUndo flip /><Gap $w={5} /><Caret $c="#a7b5c7" />
          </QatPill>
          <QatMore><IMore /></QatMore>
        </Qat>
        <Title>GST Invoice Format VBA01 Macro Enabled .xlsm  -  Microsoft Excel</Title>
        <WinBtns>
          <svg width="11" height="11" viewBox="0 0 11 11"><path d="M0 5.5H11" stroke="#888" /></svg>
          <svg width="11" height="11" viewBox="0 0 11 11"><rect x=".5" y="2.5" width="8" height="8" fill="#fff" stroke="#888" /><path d="M2.5 2.5V.5H10.5V8.5H8.5" fill="none" stroke="#888" /></svg>
          <IX s={12} c="#888" w={.9} />
        </WinBtns>
      </TitleBar>

      <TabsRow>
        <Tab $on $w={53}>Home</Tab>
        <Tab $w={60}>Insert</Tab>
        <Tab $w={92}>Page Layout</Tab>
        <Tab $w={71}>Formulas</Tab>
        <Tab $w={62}>Data</Tab>
        <Tab $w={58}>Review</Tab>
        <Tab $w={60}>View</Tab>
        <TabRight><IHelp /><IMin /><IRes /><IX s={10} /></TabRight>
      </TabsRow>

      <Ribbon>
        <Group $w={150}>
          <GroupBody>
            <PasteCol><IPaste /><span>Paste</span><Caret /></PasteCol>
            <ClipCmds>
              <Cmd><ICut /><CmdText $ml={2}>Cut</CmdText></Cmd>
              <Cmd><ICopy />Copy</Cmd>
              <Cmd><IPainter />Format Painter</Cmd>
            </ClipCmds>
          </GroupBody>
          <GroupLabel>Clipboard<Launcher><ILauncher /></Launcher></GroupLabel>
        </Group>

        <Group $w={196}>
          <GroupBody>
            <Stack $l={3} $gap={7}>
              <Row $gap={0}>
                <Combo $w={97}>Calibri<Caret /></Combo>
                <Combo $w={42} $mr={4}>11<Caret /></Combo>
                <BtnGroup $w={45}><Btn><IGrow big /></Btn><Btn><IGrow /></Btn></BtnGroup>
              </Row>
              <Row $gap={4}>
                <BtnGroup $w={80}>
                  <Btn $w={23}>B</Btn>
                  <Btn $w={23}><Glyph $i>I</Glyph></Btn>
                  <Btn><Glyph $u>U</Glyph><Caret /></Btn>
                </BtnGroup>
                <BtnGroup $w={34}><Btn><IBorders /><Caret /></Btn></BtnGroup>
                <BtnGroup $w={66}><Btn><IFill /><Caret /></Btn><Btn><IColor /><Caret /></Btn></BtnGroup>
              </Row>
            </Stack>
          </GroupBody>
          <GroupLabel>Font<Launcher><ILauncher /></Launcher></GroupLabel>
        </Group>

        <Group $w={249}>
          <GroupBody>
            <Stack $l={3} $gap={7}>
              <Row>
                <BtnGroup $w={69}><Btn><Lines kind="t" /></Btn><Btn $on><Lines kind="m" /></Btn><Btn><Lines kind="b" /></Btn></BtnGroup>
                <BtnGroup $w={31}><Btn><IOrient /><Caret /></Btn></BtnGroup>
              </Row>
              <Row>
                <BtnGroup $w={69}><Btn><Lines kind="l" /></Btn><Btn $on><Lines kind="c" /></Btn><Btn><Lines kind="r" /></Btn></BtnGroup>
                <BtnGroup $w={45}><Btn><IIndent /></Btn><Btn><IIndent flip /></Btn></BtnGroup>
              </Row>
            </Stack>
            <Divider />
            <Stack $l={0} $gap={7}>
              <Row><OrangeBtn $w={77}><IWrap />Wrap Text</OrangeBtn></Row>
              <Row $gap={5}><OrangeBtn $w={105} $dim><IMerge />Merge &amp; Center</OrangeBtn></Row>
            </Stack>
          </GroupBody>
          <GroupLabel>Alignment<Launcher><ILauncher /></Launcher></GroupLabel>
        </Group>

        <Group $w={136}>
          <GroupBody>
            <Stack $l={3} $gap={7}>
              <Row><Combo $w={127}>Custom<Caret /></Combo></Row>
              <Row>
                <BtnGroup $w={79}><Btn $w={35}><IMoney /><Caret /></Btn><Btn><NumGlyph>%</NumGlyph></Btn><Btn><NumGlyph $b>,</NumGlyph></Btn></BtnGroup>
                <BtnGroup $w={44}><Btn><IDec /></Btn><Btn><IDec more /></Btn></BtnGroup>
              </Row>
            </Stack>
          </GroupBody>
          <GroupLabel>Number<Launcher><ILauncher /></Launcher></GroupLabel>
        </Group>

        <Group $w={173}>
          <GroupBody>
            <BigCmd $w={73}><ICond /><div>Conditional</div><Line2>Formatting <Caret /></Line2></BigCmd>
            <BigCmd $w={53}><ITable /><div>Format</div><Line2>as Table <Caret /></Line2></BigCmd>
            <BigCmd $w={45}><IStyle /><div>Cell</div><Line2>Styles <Caret /></Line2></BigCmd>
          </GroupBody>
          <GroupLabel>Styles</GroupLabel>
        </Group>

        <Group $w={133}>
          <GroupBody>
            <BigCmd $w={44}><IInsert /><BigLine $mt={0}>Insert</BigLine><Line2><Caret /></Line2></BigCmd>
            <BigCmd $w={41}><IInsert del /><BigLine $mt={0}>Delete</BigLine><Line2><Caret /></Line2></BigCmd>
            <BigCmd $w={43}><IFormat /><BigLine $mt={-5}>Format</BigLine><Line2><Caret /></Line2></BigCmd>
          </GroupBody>
          <GroupLabel>Cells</GroupLabel>
        </Group>

        <Group $w={175}>
          <GroupBody>
            <EditCol>
              <Cmd $dim><ISigma /><CmdText $ml={4}>AutoSum</CmdText><Caret /></Cmd>
              <Cmd><IFillDown /><CmdText $ml={2}>Fill</CmdText><Caret /></Cmd>
              <Cmd><IEraser />Clear<Caret /></Cmd>
            </EditCol>
            <BigCmd $w={41}><ISort /><BigLine $mt={0}>Sort &amp;</BigLine><Line2>Filter <Caret /></Line2></BigCmd>
            <BigCmd $w={43}><IBinoc /><BigLine $mt={0}>Find &amp;</BigLine><Line2>Select <Caret /></Line2></BigCmd>
          </GroupBody>
          <GroupLabel>Editing</GroupLabel>
        </Group>
      </Ribbon>

      <MsgWrap>
        <MsgBar>
          <svg width="15" height="17" viewBox="0 0 15 17"><path d="M7.5 .5 L14 3 V9 Q14 14 7.5 16.5 Q1 14 1 9 V3 Z" fill="#f2962a" stroke="#6c6a58" /><path d="M7.5 1.5 L13 3.5 V8 H2 V3.5 Z" fill="#fbc063" /></svg>
          <Mark>Security Warning</Mark>
          <Brush>Some active content has been disabled.</Brush>
          <OptionsBtn>Options...</OptionsBtn>
        </MsgBar>
        <MsgClose><IX s={10} /></MsgClose>
      </MsgWrap>

      <FormulaBar>
        <NameBox>H15<NameCaret /></NameBox>
        <FxBox><FxDot />fx</FxBox>
        <FormulaInput />
        <Expand><IExpand /></Expand>
      </FormulaBar>

      <SheetArea>
        <SheetMain>
          <ColRow>
            <Corner />
            {cols.map(([c, w]) => <ColH key={c} $w={w}>{c}</ColH>)}
          </ColRow>
          <SheetBody>
            <RowHeads>
              {rowSpec.map(([l, h], i) => <RowH key={i} $h={h}>{l}</RowH>)}
            </RowHeads>
            <Canvas>
              <Invoice>
                <Letterhead>
                  <Company>Company Name</Company>
                  <AddrLine>NO - 00, ABC Road, ABC PURAM, Nellore,Andhra Pradesh PIN: 524001</AddrLine>
                  <AddrLine>Tel: +91 1234567890</AddrLine>
                  <AddrLine>GSTIN: 33AAAA0000A1Z5</AddrLine>
                </Letterhead>
                <Band />
                <TaxTitle>Tax Invoice</TaxTitle>
                <Band />

                <Cell $c="1 / 5" $r="5">To</Cell>
                <Detail $r={5}><DLabel>Invoice No</DLabel><DColon>:</DColon><div>200318-0</div></Detail>
                <Cell $c="1" $r="6">Name:</Cell>
                <Cell $c="2 / 5" $r="6" />
                <Detail $r={6}><DLabel>Invoice date</DLabel><DColon>:</DColon><div>18-03-2020</div></Detail>
                <Cell $c="1" $r="7 / 9">Address<br />:</Cell>
                <Cell $c="2 / 5" $r="7 / 9" />
                <Detail $r={7}><DLabel>Reverse Charage</DLabel><DColon>:</DColon><div>-</div></Detail>
                <Detail $r={8}><DLabel>State</DLabel><DColon>:</DColon><div>Andhra Pradhesh</div></Detail>
                <Cell $c="1" $r="9">Mobile :</Cell>
                <Cell $c="2 / 5" $r="9" />
                <Detail $r={9}><DLabel>Pincode</DLabel><DColon>:</DColon><div>524005</div></Detail>

                <Head>S.No</Head>
                <Head>Product Description</Head>
                <Head>{'HSN\nCode'}</Head>
                <Head>Qty</Head>
                <Head>Rate</Head>
                <Head>Amount</Head>
                <Head>Discount</Head>
                <Head $c="8 / 10" $pt={0}>Taxable Value</Head>

                <Blank /><Blank /><Blank /><Blank /><Blank /><Blank /><Blank /><Blank $c="8 / 10" />
              </Invoice>

              <Shape $x={703} $y={276} $w={163} $h={46} $fs={21} $pb={4}>Clear</Shape>
              <Shape $x={703} $y={336} $w={165} $h={45} $fs={21} $pb={1}>New Invoice</Shape>
              <Shape $x={702} $y={399} $w={164} $h={49} $fs={21}>Print Out</Shape>
              <Shape $x={701} $y={461} $w={164} $h={50} $fs={16.5} $pb={0}>Save invoice as PDF</Shape>
              <Shape $x={701} $y={522} $w={165} $h={48} $fs={21}>Save and Print</Shape>
              <Shape $x={902} $y={522} $w={165} $h={48} $fs={16.7} $pb={0}>Customized Printing</Shape>
              <InvNo>Invoice Number <b>0</b></InvNo>
              <TemplateId>Invoice Template ID = VBA01</TemplateId>
            </Canvas>
          </SheetBody>
        </SheetMain>
        <VScroll>
          <Split />
          <UpArrow />
          <VThumb><Grip /></VThumb>
        </VScroll>
      </SheetArea>

      <TabBar>
        <SheetNav>
          <Nav d="M1 1H2V7H1ZM7 1V7L3 4Z" /><Nav d="M6 1V7L2 4Z" /><Nav d="M2 1V7L6 4Z" /><Nav d="M1 1V7L5 4ZM6 1H7V7H6Z" />
        </SheetNav>
        <SheetTab>Sheet1</SheetTab>
        <NewTab><INewSheet /></NewTab>
        <HScrollZone>
          <Tick />
          <ArrowL />
          <HThumb><Grip $v /></HThumb>
          <ArrowR />
          <Tick />
          <CornerFill />
        </HScrollZone>
      </TabBar>

      <StatusBar>
        <Ready>Ready</Ready>
        <StatusRight>
          <ViewBtns><ViewBtn $on><IViewN /></ViewBtn><ViewBtn><IViewP /></ViewBtn><ViewBtn><IViewB /></ViewBtn></ViewBtns>
          <Pct>96%</Pct>
          <ZoomKnob>−</ZoomKnob>
          <ZoomTrack><ZoomThumb /></ZoomTrack>
          <ZoomKnob>+</ZoomKnob>
        </StatusRight>
      </StatusBar>

      <Taskbar>
        <Start><IWin /></Start>
        <SearchBox><ISearch />Type here to search</SearchBox>
        <Slot><ICortana /></Slot>
        <Slot><ITaskView /></Slot>
        <Slot $ml={2}><IEdge /></Slot>
        <Slot $open><IFolder /></Slot>
        <Slot><IStore /></Slot>
        <Slot><IFirefox /></Slot>
        <Slot><ITelegram /></Slot>
        <Slot><IShare /></Slot>
        <Slot><IChrome /></Slot>
        <Slot $active><IExcel /></Slot>
        <Spacer />
        <DeskLabel $w={55}>Desktop</DeskLabel>
        <Chevrons $w={15}>»</Chevrons>
        <Net>
          <NetLabels>U:<br />D:</NetLabels>
          <div>0.00 kbit/s<br />0.00 kbit/s</div>
        </Net>
        <TrayItem $w={20}><IUp /></TrayItem>
        <TrayItem $w={25}><IBatt /></TrayItem>
        <TrayItem $w={24}><IWifi /></TrayItem>
        <TrayItem $w={24}><ISpeaker /></TrayItem>
        <TrayItem $w={32} $hl><IPen /></TrayItem>
        <Clock><div>11:59</div><div>18-03-2020</div></Clock>
        <Notif><INotif /><NotifBadge>2</NotifBadge></Notif>
        <EndEdge />
      </Taskbar>

      <Scribble width="1366" height="768" viewBox="0 0 1366 768">
        <g fill="none" stroke="#cf1f26" strokeWidth="3.5" strokeLinecap="round">
          <path d="M344 186 C339 172 339 152 345 144 C362 138 410 137 424 142 C438 147 450 158 456 167 C450 177 432 184 412 186 C390 188 362 189 344 184" />
          <path d="M474 156 C465 157 459 162 457 170 C459 174 470 178 482 179" />
          <path d="M464 170 C485 170 505 175 521 182" />
        </g>
      </Scribble>
    </Page>
  );
}
